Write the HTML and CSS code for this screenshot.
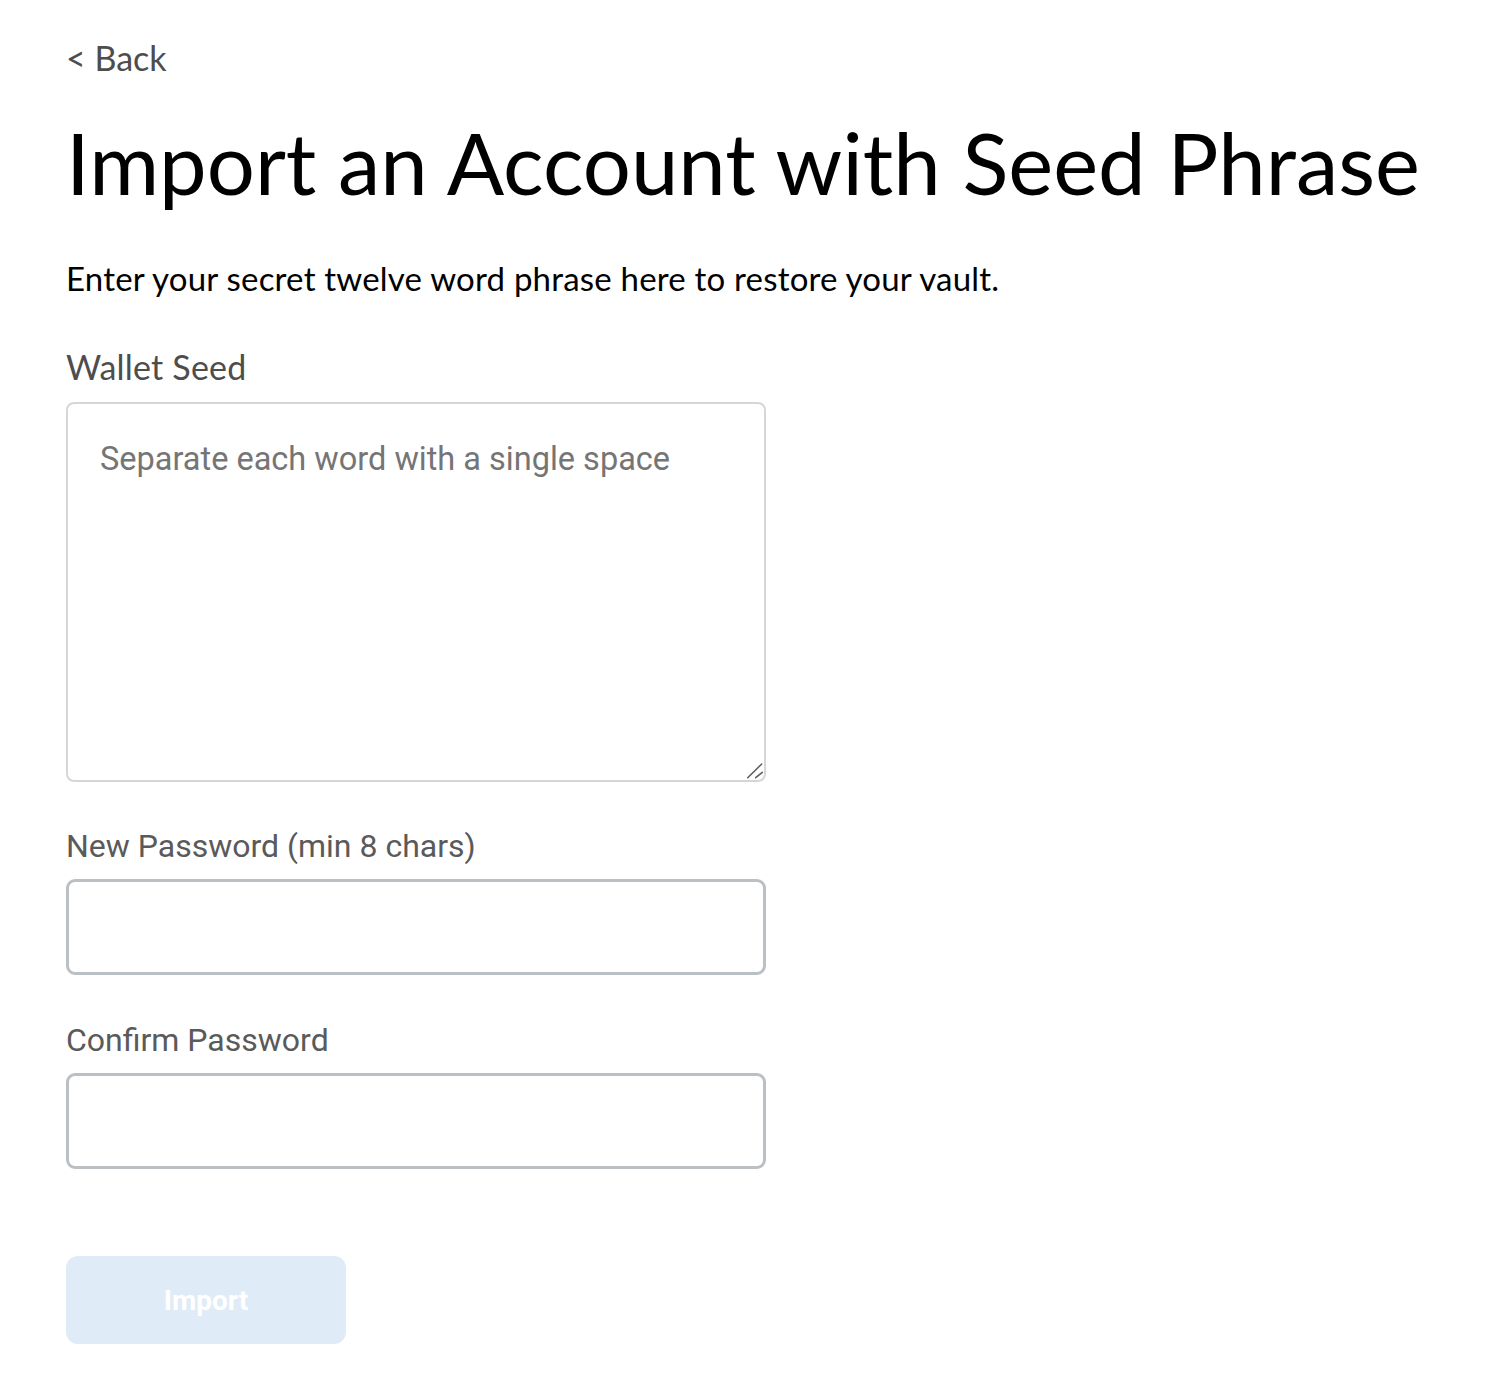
FILE: index.html
```html
<!DOCTYPE html>
<html lang="en">
<head>
<meta charset="utf-8">
<title>Import an Account with Seed Phrase</title>
<link rel="stylesheet" href="styles.css">
</head>
<body>
<main class="page">
  <a class="back" href="#">&lt; Back</a>
  <h1 class="title">Import an Account with Seed Phrase</h1>
  <p class="lead">Enter your secret twelve word phrase here to restore your vault.</p>
  <label class="label label-muli" for="seed">Wallet Seed</label>
  <div class="seed-wrap">
    <textarea id="seed" class="seed" placeholder="Separate each word with a single space"></textarea>
    <svg class="grip" width="20" height="20" viewBox="0 0 20 20" aria-hidden="true">
      <path d="M17.7 4 L3.7 17.7 M18.3 12.3 L11.7 17.7" stroke="#5f5f5f" stroke-width="1.6" stroke-linecap="round" fill="none"/>
    </svg>
  </div>
  <label class="label label-roboto" for="pw">New Password (min 8 chars)</label>
  <input id="pw" class="field" type="password">
  <label class="label label-roboto" for="pw2">Confirm Password</label>
  <input id="pw2" class="field" type="password">
  <button class="import" type="button" disabled>Import</button>
</main>
</body>
</html>
```
FILE: styles.css
```css
* { box-sizing: border-box; }
html, body { margin: 0; padding: 0; background: #fff; }
body { font-family: "Lato", "Noto Sans", sans-serif; }
.page {
  display: flex;
  flex-direction: column;
  align-items: flex-start;
  padding: 38px 0 0 66px;
}
.back {
  font-family: "Lato", sans-serif;
  font-size: 34px;
  line-height: 40px;
  color: #4d4d4d;
  text-decoration: none;
}
.title {
  margin: 34px 0 0 0;
  font-family: "Lato", sans-serif;
  font-weight: 400;
  font-size: 85px;
  line-height: 100px;
  color: #000;
}
.lead {
  margin: 46px 0 0 0;
  font-size: 33px;
  letter-spacing: 0.2px;
  line-height: 40px;
  color: #000;
}
.label {
  display: block;
  font-size: 32px;
  line-height: 40px;
  color: #4d4d4d;
}
.label-muli { margin-top: 49px; font-family: "Lato", sans-serif; font-size: 34px; letter-spacing: 0.2px; }
.label-roboto { font-family: "Roboto", sans-serif; color: #5a5a5a; }
.seed-wrap {
  position: relative;
  margin-top: 15px;
  width: 700px;
  height: 380px;
}
.seed {
  display: block;
  width: 100%;
  height: 100%;
  border: 2px solid #d6d6d6;
  border-radius: 8px;
  padding: 36px 32px;
  font-family: "Roboto", sans-serif;
  font-size: 32.5px;
  color: #333;
  outline: none;
  resize: none;
}
.seed::placeholder { color: #757575; }
.grip {
  position: absolute;
  right: 2px;
  bottom: 2px;
}
.seed-wrap + .label { margin-top: 44px; }
.field {
  margin-top: 13px;
  width: 700px;
  height: 96px;
  border: 3px solid #bbc0c5;
  border-radius: 9px;
  padding: 0 20px;
  font-size: 32px;
  outline: none;
}
.field + .label { margin-top: 45px; }
.import {
  margin-top: 87px;
  width: 280px;
  height: 88px;
  border: none;
  border-radius: 12px;
  background: #dfebf7;
  color: #fff;
  font-family: "Roboto", sans-serif;
  font-weight: 700;
  font-size: 28px;
}
```
